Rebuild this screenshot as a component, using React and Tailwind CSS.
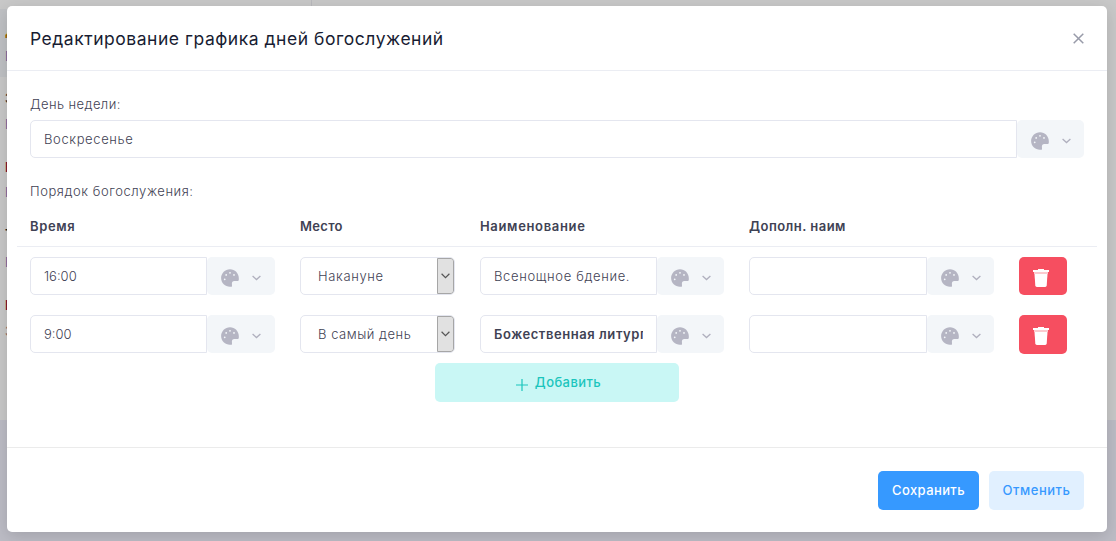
function Palette() {
  return (
    <svg className="h-[18px] w-[18px] shrink-0" viewBox="0 0 18 18">
      <path
        fillRule="evenodd"
        fill="#b5b5c3"
        d="M9 .2C4.100.2.1 4.200.1 9s4 8.800 8.900 8.800h1.200c.6 0 .9-.4.8-1l-.1-2.200c0-1.600.8-2.700 2.300-2.700h3.700c.6 0 .9-.5.9-1.100V9C17.800 4.200 13.900.2 9 .2zM3.700 11.200a.9.9 0 1 1 0-1.800.9.9 0 0 1 0 1.800zM5.200 6.800a.9.9 0 1 1 0-1.800.9.9 0 0 1 0 1.800zM9 4.700a.9.9 0 1 1 0-1.800.9.9 0 0 1 0 1.800zM13 6.800a.9.9 0 1 1 0-1.800.9.9 0 0 1 0 1.800z"
      />
    </svg>
  );
}

function Chevron() {
  return (
    <svg className="h-[6px] w-[9px] shrink-0" viewBox="0 0 9 6" fill="none" stroke="#b0b0be" strokeWidth="1.3">
      <path d="M.6 1 4.500 4.600 8.400 1" />
    </svg>
  );
}

function Trash() {
  return (
    <svg className="h-[18px] w-4" viewBox="0 0 16 18">
      <path fill="#fff" d="M0 1h5V0h6v1h5v2H0z" />
      <path fill="#fff" fillOpacity=".7" d="M1 3h14v2H1z" />
      <path fill="#fff" d="M1.500 5h13l-.8 11.500q-.1 1.400-1.500 1.400H3.800q-1.400 0-1.500-1.400z" />
    </svg>
  );
}

function ColorField({ value = "", className = "", addonClass = "w-[67px]" }) {
  return (
    <div className="flex h-[38px] w-full">
      <input
        defaultValue={value}
        className={`min-w-0 flex-1 rounded-l-[5px] border border-[#e4e6ef] bg-white px-[13px] pt-[2px] text-[13px] text-[#3f4254] outline-none ${className}`}
      />
      <button className={`flex shrink-0 items-center gap-[13px] rounded-[5px] bg-[#f3f6f9] pl-[14px] pt-[3px] ${addonClass}`}>
        <Palette />
        <Chevron />
      </button>
    </div>
  );
}

function SelectField({ value, className }) {
  return (
    <div className="flex h-[38px] w-[155px] overflow-hidden rounded-[5px] border border-[#e4e6ef] text-[13px] text-[#3f4254]">
      <div className="flex flex-1 items-center pl-[17px] pt-[2px]">
        <span className={className}>{value}</span>
      </div>
      <div className="flex w-[17px] items-center justify-center rounded-r-[3px] border border-[#a6a6a6] bg-[#e1e1e1]">
        <svg className="h-[6px] w-[9px]" viewBox="0 0 9 6" fill="none" stroke="#555" strokeWidth="1.200">
          <path d="M.6.8 4.500 4.600 8.400.8" />
        </svg>
      </div>
    </div>
  );
}

function Row({ time, place, placeClass, name, nameClass, deleteClass }) {
  return (
    <div className="grid h-[58px] grid-cols-[270px_180px_270px_270px_90px] pt-[10px]">
      <div className="pl-[13px] pr-3"><ColorField value={time} className="font-light" addonClass="w-[68px]" /></div>
      <div className="pl-[13px]"><SelectField value={place} className={placeClass} /></div>
      <div className="px-[13px]"><ColorField value={name} className={nameClass} /></div>
      <div className="pl-3 pr-[13px]"><ColorField /></div>
      <div className="pl-3">
        <button className={`flex w-12 items-start rounded-[5px] bg-[#f64e60] pl-[14px] pt-3 ${deleteClass}`}>
          <Trash />
        </button>
      </div>
    </div>
  );
}

function Backdrop() {
  return (
    <div className="absolute inset-0 flex flex-col bg-[#c8c8c8] text-[13px] leading-4">
      <div className="h-[9px] w-[312px] border-r border-[#b9b9bd]" />
      <div className="h-[68px] w-full bg-[linear-gradient(to_right,#bfc1c4_312px,#c8c8c8_312px)] pl-[5px]">
        <div className="pt-[14px] font-semibold text-[#9a6400]">Д</div>
        <div className="pt-[9px] text-[#6c629c]">В</div>
      </div>
      <div className="h-[343px] pl-[5px]">
        <div className="pt-[13px] font-semibold text-[#333]">З</div>
        <div className="pt-[10px] text-[#6c629c]">В</div>
        <div className="pt-[27px] font-semibold text-[#75102d]">В</div>
        <div className="pt-[9px] text-[#6c629c]">В</div>
        <div className="pt-[26px] font-semibold text-[#222]">Т</div>
        <div className="pt-[12px] text-[#6c629c]">В</div>
        <div className="pt-[27px] font-semibold text-[#75102d]">В</div>
        <div className="pt-[10px] text-[#8d6960]">З</div>
      </div>
      <div className="flex-1 bg-[#bcbcc5]" />
    </div>
  );
}

export default function App() {
  return (
    <div className="relative h-[541px] w-[1116px] overflow-hidden font-['Inter','Liberation_Sans',sans-serif]">
      <Backdrop />
      <div className="relative ml-[7px] mt-[6px] flex h-[526px] w-[1100px] flex-col rounded-[5px] bg-white shadow-[0_4px_16px_rgba(0,0,0,0.14)]">
        <header className="flex h-[65px] items-center justify-between border-b border-[#ebedf3] px-[23px]">
          <h1 className="whitespace-nowrap pt-[2px] text-[17.5px] tracking-[0.53px] text-[#181c32]">Редактирование графика дней богослужений</h1>
          <svg className="h-[11px] w-[11px]" viewBox="0 0 11 11" stroke="#989ba9" strokeWidth="1.500">
            <path d="M.7.7 10.300 10.300M10.300.7.7 10.300" />
          </svg>
        </header>

        <main className="flex h-[376px] flex-col px-[10px] text-[13px] text-[#3f4254]">
          <div className="px-[13px] pt-[23px]">
            <label className="block h-[26px] font-light leading-5 tracking-[0.42px]">День недели:</label>
            <ColorField value="Воскресенье" className="font-light tracking-[0.62px]" />
            <label className="mt-[23px] block h-[26px] font-light leading-5 tracking-[0.57px]">Порядок богослужения:</label>
          </div>
          <div className="grid h-[40px] grid-cols-[270px_180px_270px_270px_90px] border-b border-[#ebedf3] pt-[9px] font-semibold leading-5">
            <div className="pl-[13px] tracking-[0.65px]">Время</div>
            <div className="pl-[13px] tracking-[0.3px]">Место</div>
            <div className="pl-[13px] tracking-[0.66px]">Наименование</div>
            <div className="pl-3 tracking-[0.46px]">Дополн. наим</div>
            <div />
          </div>
          <Row time="16:00" place="Накануне" placeClass="font-light tracking-[0.65px]" name="Всенощное бдение." nameClass="font-light tracking-[0.65px]" deleteClass="h-[38px]" />
          <Row time="9:00" place="В самый день" placeClass="font-light tracking-[0.52px]" name="Божественная литургия" nameClass="font-semibold tracking-[0.56px]" deleteClass="h-[39px]" />
          <button className="ml-[418px] flex h-[39px] w-[244px] items-center justify-center gap-[7px] rounded-[5px] bg-[#c9f7f5] pl-[3px] font-medium text-[#1bc5bd]">
            <svg className="mt-1 h-3 w-3" viewBox="0 0 12 12" stroke="#1bc5bd" strokeWidth="1.200">
              <path d="M6 0v12M0 6h12" />
            </svg>
            <span className="tracking-[0.42px]">Добавить</span>
          </button>
        </main>

        <footer className="flex flex-1 items-start justify-end gap-[10px] border-t border-[#ebebeb] pr-[23px] pt-[23px] text-[13px] font-medium">
          <button className="h-[39px] w-[101px] rounded-[5px] bg-[#3699ff] tracking-[0.4px] text-white">Сохранить</button>
          <button className="h-[39px] w-[95px] rounded-[5px] bg-[#e1f0ff] tracking-[0.55px] text-[#3699ff]">Отменить</button>
        </footer>
      </div>
    </div>
  );
}
